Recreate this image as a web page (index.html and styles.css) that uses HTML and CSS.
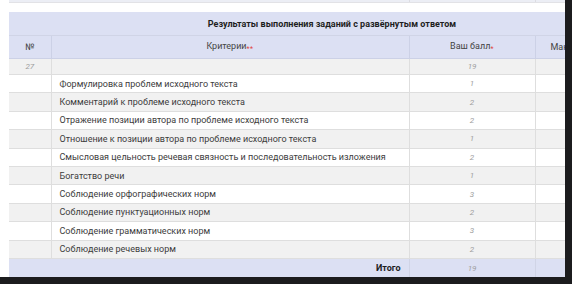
FILE: index.html
```html
<!DOCTYPE html>
<html lang="ru">
<head>
<meta charset="utf-8">
<title>Результаты</title>
<link rel="stylesheet" href="styles.css">
</head>
<body>
<div class="frame">
  <div class="prev">
    <div class="prev-cell prev-wide"></div>
    <div class="prev-cell"></div>
    <div class="prev-cell"></div>
  </div>
  <table class="results">
    <colgroup>
      <col class="c-num">
      <col class="c-crit">
      <col class="c-score">
      <col class="c-max">
    </colgroup>
    <thead>
      <tr class="title-row"><th colspan="4">Результаты выполнения заданий с развёрнутым ответом</th></tr>
      <tr class="head-row">
        <th>№</th>
        <th>Критерии<span class="req">**</span></th>
        <th>Ваш балл<span class="req">*</span></th>
        <th class="max-head">Максимальный балл</th>
      </tr>
    </thead>
    <tbody>
      <tr class="task-row gray"><td class="num">27</td><td></td><td class="score">19</td><td></td></tr>
      <tr><td></td><td class="crit">Формулировка проблем исходного текста</td><td class="score">1</td><td></td></tr>
      <tr class="gray"><td></td><td class="crit">Комментарий к проблеме исходного текста</td><td class="score">2</td><td></td></tr>
      <tr><td></td><td class="crit">Отражение позиции автора по проблеме исходного текста</td><td class="score">2</td><td></td></tr>
      <tr class="gray"><td></td><td class="crit">Отношение к позиции автора по проблеме исходного текста</td><td class="score">1</td><td></td></tr>
      <tr><td></td><td class="crit">Смысловая цельность речевая связность и последовательность изложения</td><td class="score">2</td><td></td></tr>
      <tr class="gray"><td></td><td class="crit">Богатство речи</td><td class="score">1</td><td></td></tr>
      <tr><td></td><td class="crit">Соблюдение орфографических норм</td><td class="score">3</td><td></td></tr>
      <tr class="gray"><td></td><td class="crit">Соблюдение пунктуационных норм</td><td class="score">2</td><td></td></tr>
      <tr><td></td><td class="crit">Соблюдение грамматических норм</td><td class="score">3</td><td></td></tr>
      <tr class="gray"><td></td><td class="crit">Соблюдение речевых норм</td><td class="score">2</td><td></td></tr>
      <tr class="total-row"><td colspan="2" class="total-label">Итого</td><td class="score">19</td><td></td></tr>
    </tbody>
  </table>
</div>
</body>
</html>
```
FILE: styles.css
```css
html, body {
  margin: 0;
  padding: 0;
  background: #1c1c1e;
}
body {
  width: 572px;
  height: 284px;
  overflow: hidden;
  font-family: Roboto, "Liberation Sans", Arial, sans-serif;
}
.frame {
  width: 565px;
  height: 277px;
  background: #ffffff;
  overflow: hidden;
}
.prev {
  display: grid;
  grid-template-columns: 400px 126px 120px;
  width: 646px;
  margin-left: 9px;
  height: 2px;
  background: #eceef5;
  border-bottom: 1px solid #e2e2e6;
}
.prev-cell {
  border-left: 1px solid #dcdce2;
}
.prev-wide {
  border-left: none;
}
.results {
  margin-top: 9px;
  margin-left: 9px;
  width: 646px;
  border-collapse: collapse;
  table-layout: fixed;
  font-size: 9px;
  color: #3a3a3a;
}
.c-num { width: 42px; }
.c-crit { width: 358px; }
.c-score { width: 126px; }
.c-max { width: 120px; }
.results th,
.results td {
  padding: 0;
  border: 1px solid #dedede;
  white-space: nowrap;
  overflow: hidden;
}
.results .title-row th {
  height: 23px;
  background: #dce0f3;
  font-weight: bold;
  color: #1e1e1e;
  text-align: center;
  border: none;
  border-bottom: 1px solid #d0d4e6;
}
.results .head-row th {
  height: 22px;
  background: #dce0f3;
  font-weight: normal;
  color: #444;
  text-align: center;
  border-color: #ccd1e6;
  border-top: none;
}
.results .head-row th.max-head {
  text-align: left;
  padding-left: 15px;
}
.req {
  color: #e0443e;
  font-size: 7px;
  vertical-align: -2px;
  letter-spacing: 0.5px;
}
.results tbody td {
  height: 17.4px;
  background: #ffffff;
}
.results tbody tr.gray td {
  background: #f1f1f1;
}
.results tbody tr.task-row td {
  height: 15px;
}
.results th:first-child,
.results td:first-child {
  border-left: none;
}
.results .crit {
  padding-left: 8px;
  color: #3c3c3c;
}
.results .num,
.results .score {
  text-align: center;
  font-style: italic;
  color: #9e9e9e;
  font-size: 8px;
}
.results .total-row td {
  height: 19px;
  background: #dce0f3;
  border-color: #d0d4e6;
}
.results .total-label {
  text-align: right;
  padding-right: 8px;
  font-weight: bold;
  color: #1e1e1e;
}
```
